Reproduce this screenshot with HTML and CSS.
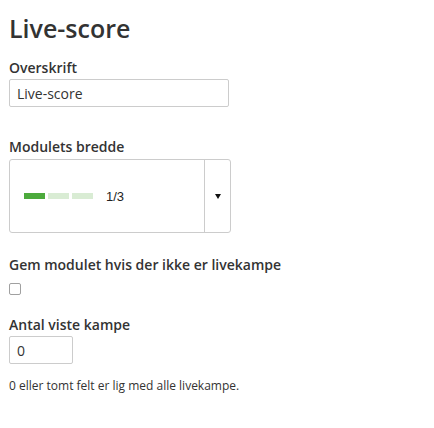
FILE: index.html
```html
<!DOCTYPE html>
<html lang="da">
<head>
<meta charset="utf-8">
<title>Live-score</title>
<link rel="stylesheet" href="styles.css">
</head>
<body>
<div class="page">
  <h1 class="title">Live-score</h1>

  <div class="field field-heading">
    <label class="label" for="heading">Overskrift</label>
    <input id="heading" class="text-input wide" type="text" value="Live-score">
  </div>

  <div class="field field-width">
    <label class="label">Modulets bredde</label>
    <div class="select">
      <div class="select-value">
        <div class="bars">
          <span class="bar on"></span>
          <span class="bar"></span>
          <span class="bar"></span>
        </div>
        <span class="fraction">1/3</span>
      </div>
      <div class="select-toggle"><span class="caret"></span></div>
    </div>
  </div>

  <div class="field field-hide">
    <label class="label" for="hide">Gem modulet hvis der ikke er livekampe</label>
    <input id="hide" class="checkbox" type="checkbox">
  </div>

  <div class="field field-count">
    <label class="label" for="count">Antal viste kampe</label>
    <input id="count" class="text-input narrow" type="text" value="0">
  </div>

  <p class="help">0 eller tomt felt er lig med alle livekampe.</p>
</div>
</body>
</html>
```

FILE: styles.css
```css
html, body {
  margin: 0;
  padding: 0;
  background: #ffffff;
}

body {
  font-family: "Open Sans", "Liberation Sans", sans-serif;
  color: #333333;
}

.page {
  padding: 12px 9px 0;
  display: flex;
  flex-direction: column;
}

.title {
  margin: 0;
  font-size: 25px;
  line-height: 32px;
  font-weight: 600;
  color: #333333;
}

.field {
  display: flex;
  flex-direction: column;
  align-items: flex-start;
}

.field-heading { margin-top: 14px; gap: 1px; }
.field-width { margin-top: 30px; gap: 2px; }
.field-hide { margin-top: 22px; gap: 8px; }
.field-count { margin-top: 20px; gap: 1px; }

.label {
  font-size: 14px;
  line-height: 20px;
  font-weight: 600;
  color: #333333;
}

.text-input {
  box-sizing: border-box;
  height: 28px;
  margin: 0;
  padding: 0 7px;
  border: 1px solid #cccccc;
  border-radius: 2px;
  font-family: "Open Sans", "Liberation Sans", sans-serif;
  font-size: 14px;
  color: #333333;
  background: #ffffff;
  outline: none;
}

.wide { width: 220px; }
.narrow { width: 64px; }

.select {
  box-sizing: border-box;
  width: 222px;
  height: 74px;
  display: flex;
  border: 1px solid #cccccc;
  border-radius: 3px;
  background: #ffffff;
}

.select-value {
  flex: 1;
  display: flex;
  align-items: center;
  padding-left: 14px;
  gap: 13px;
}

.bars {
  display: flex;
  gap: 3px;
}

.bar {
  width: 21px;
  height: 6px;
  background: #d9ecd4;
}

.bar.on {
  background: #4caa3c;
}

.fraction {
  font-family: "Liberation Sans", Arial, sans-serif;
  font-size: 13px;
  color: #222222;
}

.select-toggle {
  width: 25px;
  border-left: 1px solid #cccccc;
  display: flex;
  align-items: center;
  justify-content: center;
}

.caret {
  width: 0;
  height: 0;
  border-left: 3px solid transparent;
  border-right: 3px solid transparent;
  border-top: 5px solid #111111;
  margin-top: 1px;
}

.checkbox {
  appearance: none;
  -webkit-appearance: none;
  box-sizing: border-box;
  width: 12px;
  height: 12px;
  margin: 0;
  border: 1px solid #a0a0a0;
  border-radius: 2px;
  background: #ffffff;
}

.help {
  margin: 13px 0 0;
  font-size: 12px;
  line-height: 17px;
  color: #333333;
}
```
